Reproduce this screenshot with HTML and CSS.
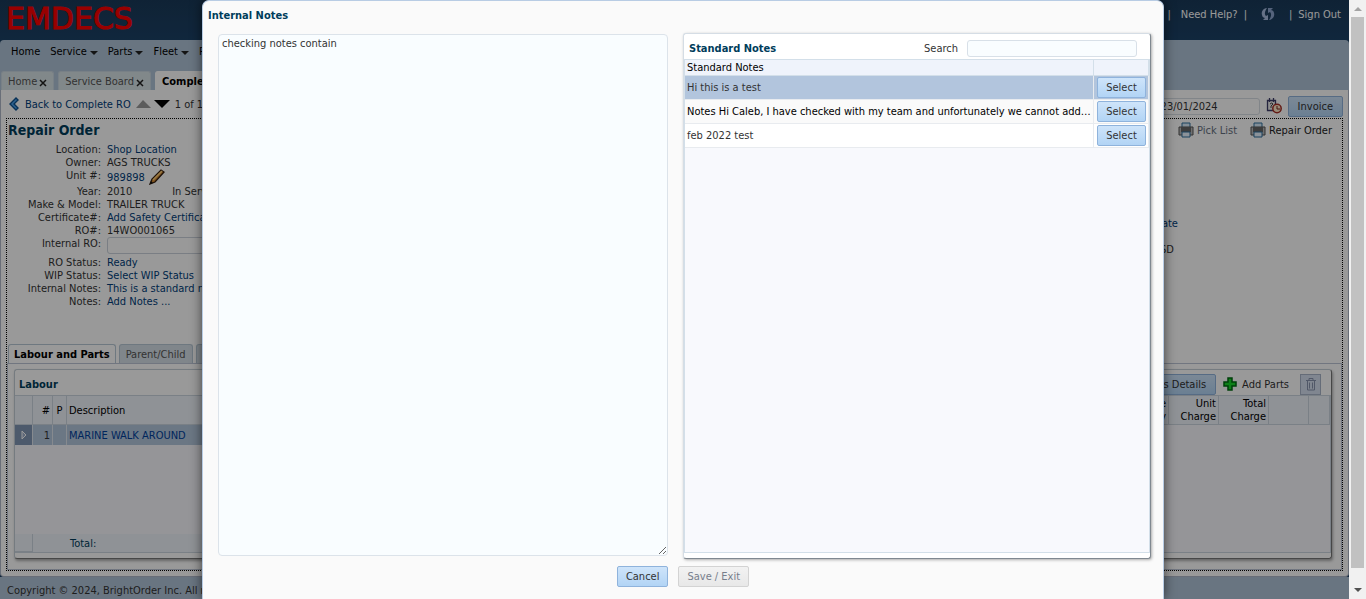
FILE: index.html
```html
<!DOCTYPE html>
<html lang="en">
<head>
<meta charset="utf-8">
<title>EMDECS - Repair Order</title>
<link rel="stylesheet" href="styles.css">
</head>
<body>
<div class="window">
  <div class="app">
    <header class="banner">
      <div class="logo">EMDECS</div>
      <nav class="account">
        <a href="#">Announcements</a><span class="bar">|</span>
        <a href="#" class="help">Need Help?</a><span class="bar">|</span>
        <svg class="swirl" width="14" height="14" viewBox="0 0 14 14"><path d="M6 1C2 1 0 5 1 8c0 2 2 3 3 3l-2 2h5V8L5 9C3 7 4 4 6 1z" fill="#a9bde0"/><path d="M8 13c4 0 6-4 5-7 0-2-2-3-3-3l2-2H7v5l2-1c2 2 1 5-1 8z" fill="#8ea6cf"/></svg>
        <span class="bar">|</span><a href="#">Sign Out</a>
      </nav>
    </header>
    <nav class="menu">
      <a href="#">Home</a><a href="#" class="drop">Service</a><a href="#" class="drop">Parts</a><a href="#" class="drop">Fleet</a><a href="#" class="drop">Reports</a>
    </nav>
    <div class="tabs">
      <button class="tab">Home <svg class="close" viewBox="0 0 8 8"><path d="M1 1l6 6M7 1L1 7"/></svg></button>
      <button class="tab">Service Board <svg class="close" viewBox="0 0 8 8"><path d="M1 1l6 6M7 1L1 7"/></svg></button>
      <button class="tab active">Complete RO</button>
    </div>
    <main class="content">
      <div class="toolbar">
        <svg class="back" width="12" height="14" viewBox="0 0 12 14"><path d="M8 1L2 7l6 6 2-2-4-4 4-4z" fill="#4da4ee" stroke="#0f5290" stroke-width="1.4"/></svg>
        <a href="#">Back to Complete RO</a>
        <svg width="34" height="8" viewBox="0 0 34 8"><path d="M0 8L7 0l8 8z" fill="#999"/><path d="M18 0h16l-8 8z" fill="#000"/></svg>
        <span class="count">1 of 1</span>
        <div class="spacer"></div>
        <div class="dating">
          <input class="date" type="text" value="23/01/2024" aria-label="Date">
          <svg width="16" height="16" viewBox="0 0 16 16"><path d="M1.500 2.500h8v10h-8zM3.500 0v4M7.500 0v4" fill="#eee" stroke="#3d3d68" stroke-width="1.300"/><path d="M4 6q2-2 3 0l-2 2v2" fill="none" stroke="#444"/><circle cx="11" cy="10.500" r="4.200" fill="#ffe8c8" stroke="#a82f26" stroke-width="1.500"/><path d="M11 8v3h3" stroke="#752018" fill="none"/></svg>
          <button class="btn invoice">Invoice</button>
        </div>
      </div>
      <section class="order">
        <div class="order-top">
          <div class="order-main">
            <h1>Repair Order</h1>
            <dl class="details">
              <dt>Location:</dt><dd><a href="#">Shop Location</a></dd>
              <dt>Owner:</dt><dd>AGS TRUCKS</dd>
              <dt>Unit #:</dt><dd class="unit"><a href="#">989898</a><svg width="16" height="16" viewBox="0 0 16 16"><path d="M1 15l2-5L12 1l3 2-9 10z" fill="#d58a32" stroke="#35200f" stroke-width="1.300"/><path d="M4 11l9-9" stroke="#ffd17a" stroke-width="1.500"/><path d="M1 15l1-3 2 2z" fill="#111"/></svg></dd>
              <dt>Year:</dt><dd class="year"><span>2010</span><span>In Service Date:</span></dd>
              <dt>Make &amp; Model:</dt><dd>TRAILER TRUCK</dd>
              <dt>Certificate#:</dt><dd><a href="#">Add Safety Certificate</a></dd>
              <dt>RO#:</dt><dd>14WO001065</dd>
              <dt class="tall"><label for="iro">Internal RO:</label></dt><dd class="tall"><input id="iro" type="text"></dd>
              <dt>RO Status:</dt><dd><a href="#">Ready</a></dd>
              <dt>WIP Status:</dt><dd><a href="#">Select WIP Status</a></dd>
              <dt>Internal Notes:</dt><dd><a href="#">This is a standard note</a></dd>
              <dt>Notes:</dt><dd><a href="#">Add Notes ...</a></dd>
            </dl>
          </div>
          <div class="order-side">
            <div class="prints">
              <a href="#" class="muted"><svg class="printer" viewBox="0 0 16 16"><path d="M4 1h8v5H4z" fill="#d9ecfa" stroke="#2c6f9e"/><path d="M1 5h14v8H1z" fill="#bbb" stroke="#555"/><path d="M3 5h10v5H3z" fill="#666"/><path d="M4 10h8v5H4z" fill="#e8f4ff" stroke="#2c6f9e"/></svg>Pick List</a>
              <a href="#"><svg class="printer" viewBox="0 0 16 16"><path d="M4 1h8v5H4z" fill="#d9ecfa" stroke="#2c6f9e"/><path d="M1 5h14v8H1z" fill="#bbb" stroke="#555"/><path d="M3 5h10v5H3z" fill="#666"/><path d="M4 10h8v5H4z" fill="#e8f4ff" stroke="#2c6f9e"/></svg>Repair Order</a>
            </div>
            <div class="facts"><a href="#">Add Date</a><span class="currency">USD</span></div>
          </div>
        </div>
        <div class="subtabs">
          <button class="subtab active">Labour and Parts</button><button class="subtab">Parent/Child</button><button class="subtab">History</button>
        </div>
        <div class="tabpanel">
          <section class="grid-card">
            <div class="card-head"><h2>Labour</h2></div>
            <div class="card-body">
              <table class="lines">
                <thead><tr><th class="c-arrow"></th><th class="c-num">#</th><th class="c-p">P</th><th>Description</th></tr></thead>
                <tbody><tr><td class="arrow"><svg width="6" height="10" viewBox="0 0 6 10"><path d="M1 1l4 4-4 4z" fill="#9fb0cc" stroke="#fff"/></svg></td><td class="c-num">1</td><td></td><td><a href="#">MARINE WALK AROUND</a></td></tr></tbody>
              </table>
              <div class="total"><span class="total-cell"></span><span>Total:</span></div>
            </div>
          </section>
          <section class="grid-card">
            <div class="card-head">
              <div class="spacer"></div>
              <button class="btn">Parts Details</button>
              <a href="#" class="add"><svg width="14" height="14" viewBox="0 0 14 14"><path d="M5 1h4v4h4v4H9v4H5V9H1V5h4z" fill="#19d52b" stroke="#006b10" stroke-width="1.500"/></svg>Add Parts</a>
              <button class="trash" aria-label="Delete"><svg width="12" height="14" viewBox="0 0 12 14" fill="none" stroke="#8893ad"><path d="M1 3.500h10M4 3V1.500h4V3M2.500 4v9h7V4M4.500 5.500v6M7.500 5.500v6"/></svg></button>
            </div>
            <div class="card-body">
              <table class="lines">
                <thead><tr><th>Description</th><th class="c-money">Core<br>Qty</th><th class="c-money">Unit<br>Charge</th><th class="c-money">Total<br>Charge</th><th class="c-gap"></th><th class="c-end"></th></tr></thead>
              </table>
            </div>
          </section>
        </div>
      </section>
    </main>
    <footer class="footer">Copyright © 2024, BrightOrder Inc. All rights reserved.</footer>
    <div class="shade"></div>
  </div>
  <div class="scroll"><span class="up"></span><span class="thumb"></span><span class="down"></span></div>
  <div class="layer">
    <div class="modal" role="dialog" aria-labelledby="dlg">
      <h2 id="dlg">Internal Notes</h2>
      <div class="columns">
        <textarea class="notes" aria-label="Internal Notes">checking notes contain</textarea>
        <section class="standard">
          <div class="standard-head"><h3>Standard Notes</h3><label for="q">Search</label><input id="q" type="text"></div>
          <div class="standard-body">
            <table class="picks">
              <thead><tr><th>Standard Notes</th><th class="c-select"></th></tr></thead>
              <tbody>
                <tr class="selected"><td>Hi this is a test</td><td><button class="btn">Select</button></td></tr>
                <tr class="alt"><td>Notes Hi Caleb, I have checked with my team and unfortunately we cannot add a...</td><td><button class="btn">Select</button></td></tr>
                <tr><td>feb 2022 test</td><td><button class="btn">Select</button></td></tr>
              </tbody>
            </table>
          </div>
        </section>
      </div>
      <div class="actions"><button class="btn">Cancel</button><button class="btn off" disabled>Save / Exit</button></div>
    </div>
  </div>
</div>
</body>
</html>
```
FILE: styles.css
```css
* { box-sizing: border-box; }
body { margin: 0; overflow: hidden; }
body, button, input, textarea {
  font-family: Tahoma, "DejaVu Sans Condensed", "DejaVu Sans", sans-serif;
  font-stretch: condensed;
  font-size: 11px;
  line-height: 13px;
  color: #333;
}
a { color: #003d7a; text-decoration: none; }
h1, h2, h3 { margin: 0; color: #003d5b; font-size: 11px; }
button { margin: 0; }
.spacer { flex: 1; }

.window { position: relative; display: flex; height: 100vh; overflow: hidden; }
.app { position: relative; flex: 1; min-width: 0; display: flex; flex-direction: column; background: #1b3f61; }
.shade { position: absolute; inset: 0; background: rgba(0, 0, 0, .4); }

.banner { display: flex; justify-content: space-between; height: 40px; padding: 0 8px 0 6px; background: linear-gradient(#1a3a59, #1c4166); }
.logo { font: 30px/38px "DejaVu Sans", sans-serif; color: #f00; -webkit-text-stroke: 1px #f00; }
.account { display: flex; align-items: center; height: 28px; gap: 6px; }
.account a, .account .bar { color: #fff; }
.help { margin-left: 4px; }
.swirl { margin: 0 8px; }

.menu { display: flex; gap: 10px; height: 31px; padding: 5px 11px; background: #b0c4d8; border-radius: 4px 4px 0 0; }
.menu a { color: #000; }
.drop::after { content: ""; display: inline-block; margin-left: 3px; border: 4px solid transparent; border-top-color: #222; border-bottom: 0; }
.tabs { display: flex; gap: 4px; height: 19px; padding-left: 1px; background: #b0c4d8; }
.tab { display: flex; align-items: center; gap: 2px; padding: 0 6px; border: 1px solid #c8d5df; border-bottom: 0; border-radius: 3px 3px 0 0; background: #d8e3e6; color: #555; }
.tab.active { background: #fff; border-color: #fff; color: #000; font-weight: bold; }
.close { width: 8px; height: 8px; margin-top: 4px; stroke: #222; stroke-width: 1.5; }

.content { flex: 1; display: flex; flex-direction: column; padding: 0 5px 5px; border: 1px solid #b0b8c8; border-top: 0; border-radius: 0 0 4px 4px; background: #fff; }
.toolbar { display: flex; align-items: center; height: 28px; padding: 0 0 0 2px; gap: 5px; }
.dating { display: flex; align-items: center; gap: 6px; padding-top: 4px; }
.date { width: 200px; height: 17px; border: 1px solid #d8dee4; border-radius: 3px; padding: 0 0 0 100px; background: #fff; }
.btn { height: 21px; padding: 0 9px; border: 1px solid #8fb3dc; border-radius: 2px; background: linear-gradient(#cee4fa, #b2d4f5); color: #333; }

.order { flex: 1; display: flex; flex-direction: column; border: 1px dotted #000; }
.order-top { display: flex; justify-content: space-between; height: 225px; }
.order h1 { font-size: 14px; line-height: 22px; padding-left: 1px; }
.details { display: grid; grid-template-columns: 94px 1fr; column-gap: 6px; grid-auto-rows: minmax(13px, auto); margin: 2px 0 0; width: 300px; }
.details dt { text-align: right; }
.details dd { margin: 0; white-space: nowrap; }
.unit { display: flex; align-items: center; gap: 4px; height: 16px; }
.year { display: flex; gap: 40px; }
.details .tall { height: 19px; }
.details input { width: 190px; height: 17px; border: 1px solid #ccd3dc; border-radius: 3px; background: #fff; }
.order-side { width: 200px; padding: 3px 10px 0 0; }
.prints { display: flex; justify-content: flex-end; gap: 13px; }
.prints a { display: flex; align-items: center; gap: 3px; color: #222; white-space: nowrap; }
.prints .muted { color: #667080; }
.printer { width: 16px; height: 16px; }
.facts { display: grid; justify-items: end; gap: 13px; padding-top: 79px; width: 35px; margin-left: -10px; white-space: nowrap; }
.currency { padding-right: 4px; }

.subtabs { display: flex; gap: 3px; height: 19px; padding-left: 1px; }
.subtab { padding: 0 6px; border: 1px solid #b8c8d5; border-bottom: 0; border-radius: 3px 3px 0 0; background: #d5e0e8; color: #555; }
.subtab.active { background: #fff; color: #000; font-weight: bold; padding: 0 5px; }
.tabpanel { flex: 1; display: grid; grid-template-columns: 1fr 1fr; gap: 14px; padding: 5px 9px 10px 6px; border: 1px solid #bcc5d5; }
.grid-card { display: flex; flex-direction: column; padding-bottom: 5px; border: 1px solid #c4cdd5; border-bottom-color: #777; border-right-color: #777; border-radius: 3px; box-shadow: 1px 2px 3px #aaa; }
.card-head { display: flex; align-items: center; height: 25px; padding: 3px 10px 0 4px; gap: 7px; }
.add { display: flex; align-items: center; gap: 5px; color: #333; }
.trash { width: 21px; height: 21px; margin-left: 4px; padding: 0; border: 1px solid #a8b4c8; background: #d5e0f0; }
.trash svg { display: block; margin: auto; }
.card-body { flex: 1; display: flex; flex-direction: column; justify-content: space-between; border: 1px solid #cbd5df; border-width: 1px 1px 1px 0; background: #f8f9fd; }
.lines { width: 100%; border-collapse: separate; border-spacing: 0; table-layout: fixed; }
.lines th { height: 29px; padding: 0 2px; border-right: 1px solid #cbd5df; border-bottom: 1px solid #cbd5df; background: #eff3fb; color: #000; font-weight: normal; text-align: left; }
.lines td { height: 20px; padding: 0 2px; border-right: 1px solid #dfe7ef; background: #b2c6dd; }
.lines td a { color: #00409a; }
.lines .arrow { background: #8197b5; text-align: center; }
.lines .arrow svg { display: block; margin: auto; }
.lines .c-arrow { width: 18px; }
.lines .c-num { width: 20px; text-align: right; }
.lines .c-p { width: 14px; text-align: center; }
.lines .c-money { width: 50px; text-align: right; }
.lines .c-gap { width: 40px; }
.lines .c-end { width: 21px; }
.total { display: flex; gap: 37px; height: 18px; line-height: 20px; background: #eff3fb; color: #003d5b; }
.total-cell { width: 18px; border: 1px solid #cbd5df; border-width: 0 1px 1px 0; }
.footer { height: 22px; padding: 7px 7px 0; background: #b0c4d8; }

.scroll { width: 17px; display: flex; flex-direction: column; align-items: center; background: #f1f1f1; }
.up, .down { border: 4px solid transparent; }
.up { border-bottom-color: #a3a3a3; border-top: 0; margin: 7px 0 6px; }
.thumb { flex: 1; width: 13px; background: #c1c1c1; }
.down { border-top-color: #505050; border-bottom: 0; margin: 20px 0 7px; }

.layer { position: absolute; inset: 0; display: flex; justify-content: center; }
.modal { width: 100%; max-width: 962px; padding: 0 12px 0 15px; border: 1px solid #b8cce4; border-bottom: 0; border-radius: 7px 7px 0 0; background: #fafafa; box-shadow: 0 0 12px rgba(0, 0, 0, .6); display: flex; flex-direction: column; }
.modal > h2 { margin-left: -10px; height: 33px; padding-top: 8px; }
.columns { flex: 1; display: grid; grid-template-columns: 450px 1fr; gap: 15px; }
.notes { width: 100%; height: 100%; padding: 2px 3px; border: 1px solid #dce3ea; border-radius: 4px; background: #f9fdff; resize: both; }
.standard { display: flex; flex-direction: column; margin: -1px 0 -3px; padding-bottom: 5px; border: 1px solid #d5dde5; border-right-color: #808890; border-bottom-color: #808890; border-radius: 3px; background: #fff; box-shadow: 1px 1px 3px #aaa; }
.standard-head { display: flex; align-items: center; height: 25px; padding: 4px 13px 0 5px; gap: 9px; }
.standard-head h3 { flex: 1; }
.standard-head input { width: 170px; height: 17px; border: 1px solid #d8e0e8; border-radius: 3px; background: #f9fdff; }
.standard-body { flex: 1; border: 1px solid #d3dfe9; background: #f8f9fd; }
.picks { width: 100%; border-collapse: separate; border-spacing: 0; table-layout: fixed; }
.picks th { height: 16px; padding: 0 2px; border-right: 1px solid #d3dfe9; border-bottom: 1px solid #d3dfe9; background: #eff3fb; color: #000; font-weight: normal; text-align: left; }
.picks td { height: 24px; padding: 0 2px; border-right: 1px solid #e8ebef; border-bottom: 1px solid #e8ebef; background: #fff; overflow: hidden; text-overflow: ellipsis; white-space: nowrap; }
.picks .selected td { background: #b2c5dd; }
.picks .alt td { background: #fafafa; color: #000; }
.picks .c-select { width: 55px; }
.picks .btn { display: block; width: 49px; padding: 0; margin-left: 1px; }
.actions { display: flex; justify-content: center; gap: 10px; height: 43px; padding: 10px 3px 12px 0; }
.actions .btn { padding: 0 8px; }
.btn.off { border-color: #d3d3d3; background: linear-gradient(#f2f2f2, #e8e8e8); color: #777e8c; }
```
